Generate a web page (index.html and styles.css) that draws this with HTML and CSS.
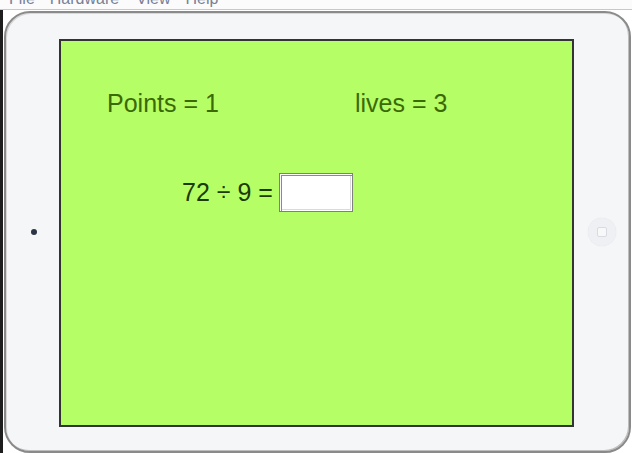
FILE: index.html
```html
<!DOCTYPE html>
<html>
<head>
<meta charset="utf-8">
<link rel="stylesheet" href="styles.css">
</head>
<body>
<div class="menubar"><div class="menutext"><span>File</span><span>Hardware</span><span>View</span><span>Help</span></div></div>
<div class="stage">
  <div class="device">
    <div class="camera"></div>
    <div class="screen">
      <div class="status">
        <div class="points">Points = 1</div>
        <div class="lives">lives = 3</div>
      </div>
      <div class="question">
        <span class="eq">72 ÷ 9 =</span>
        <input class="answer" type="text">
      </div>
    </div>
    <div class="home"><div class="home-sq"></div></div>
  </div>
</div>
</body>
</html>
```
FILE: styles.css
```css
html, body {
  margin: 0;
  padding: 0;
  background: #ffffff;
  width: 632px;
  height: 453px;
  overflow: hidden;
  font-family: "Liberation Sans", Arial, sans-serif;
}
.menubar {
  height: 9px;
  overflow: hidden;
  border-bottom: 1px solid #c8c8c8;
  background: #fbfbfb;
}
.menutext {
  margin-top: -9px;
  padding-left: 9px;
  display: flex;
  gap: 15px;
  font-size: 16px;
  line-height: 16px;
  color: #75819a;
}
.menutext span:nth-child(3) {
  margin-left: 2px;
}
.stage {
  display: flex;
  height: 443px;
  border-left: 3px solid #1e1e1e;
  background: #ffffff;
  padding: 1px 1px 0 1px;
}
.device {
  flex: 1;
  display: flex;
  align-items: center;
  border-radius: 26px;
  background: #f5f6f8;
  border: 2px solid #8a8a8a;
  box-shadow: inset 1px 1px 0 #d8d8d8, inset -1px -1px 0 #bdbdbd;
  margin-bottom: 1px;
  position: relative;
}
.camera {
  width: 6px;
  height: 6px;
  border-radius: 50%;
  background: #2c3544;
  margin-left: 25px;
  margin-right: 22px;
  flex: none;
}
.screen {
  align-self: stretch;
  margin: 26px 0 24px 0;
  width: 511px;
  flex: none;
  background: #b6fe66;
  border: 2px solid #333333;
  display: flex;
  flex-direction: column;
}
.status {
  display: flex;
  padding: 48px 0 0 46px;
  font-size: 25px;
  line-height: 29px;
  color: #3a6a06;
}
.points {
  width: 248px;
}
.question {
  display: flex;
  align-items: center;
  gap: 6px;
  padding: 55px 0 0 121px;
  font-size: 25px;
  color: #1c3a02;
}
.answer {
  width: 74px;
  height: 39px;
  box-sizing: border-box;
  border: 1px solid #7f7f7f;
  box-shadow: inset 1px 1px 0 #ffffff, inset 2px 2px 0 #8a8a8a, inset -1px -1px 0 #ffffff, inset -2px -2px 0 #dadada;
  background: #ffffff;
  margin: 0;
  padding: 0;
  outline: none;
}
.home {
  width: 28px;
  height: 28px;
  border-radius: 50%;
  background: #eff0f3;
  box-shadow: 0 0 1px #dcdce0;
  margin-left: 14px;
  display: flex;
  align-items: center;
  justify-content: center;
  flex: none;
}
.home-sq {
  width: 8px;
  height: 8px;
  border: 1px solid #dadbe0;
  border-radius: 2px;
  background: #f7f8fa;
}
```
